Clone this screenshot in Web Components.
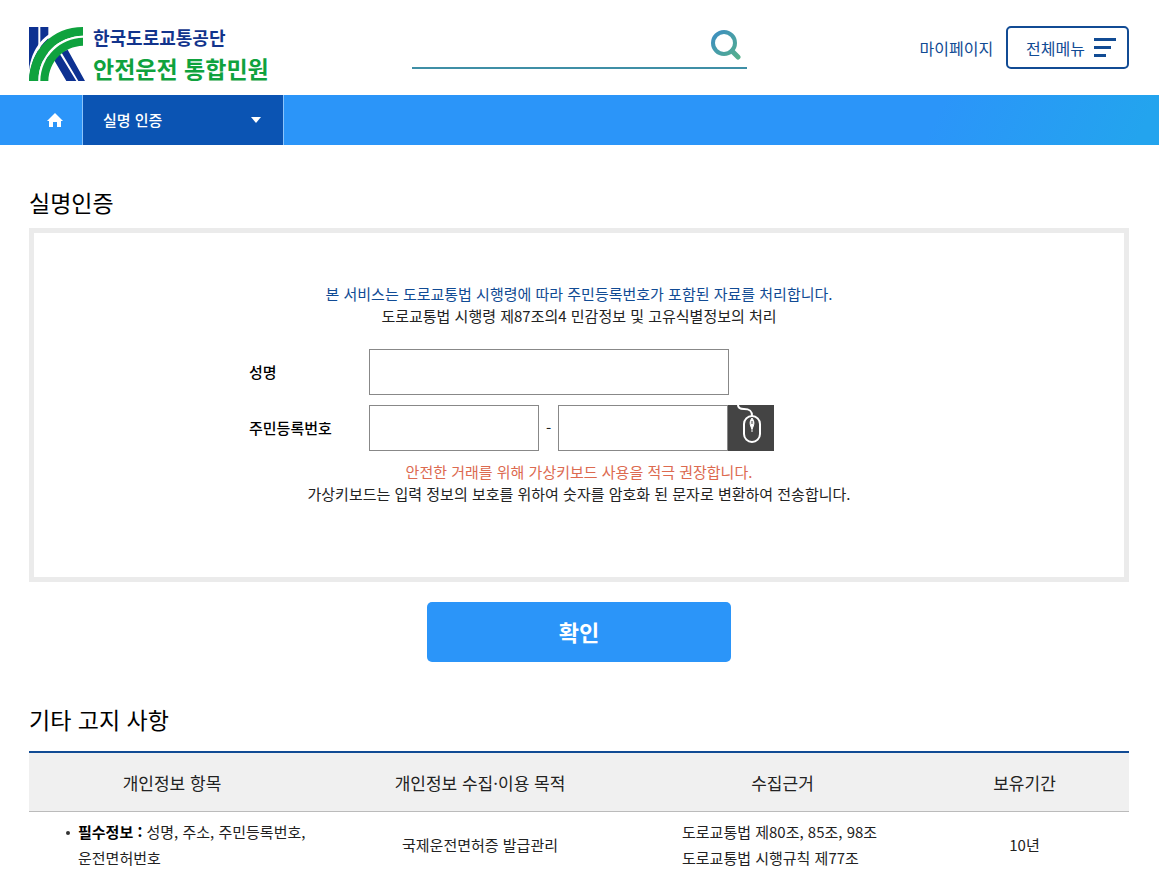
<!DOCTYPE html>
<html lang="ko">
<head>
<meta charset="UTF-8">
<meta name="viewport" content="width=device-width, initial-scale=1">
<title>실명인증 - 안전운전 통합민원</title>
<style>
    * { box-sizing: border-box; }
    body {
        margin: 0;
        background: #fff;
        color: #222;
        font-family: "Noto Sans CJK KR", "Noto Sans", sans-serif;
        font-size: 15px;
        line-height: 22px;
        --navy: #114b94;
        --blue: #2b95f9;
        --deep: #0b54b3;
        --gutter: 0 30px 0 29px;
    }
    main { display: block; padding: var(--gutter); }
</style>
</head>
<body>
<site-header></site-header>
<site-nav>실명 인증</site-nav>
<main>
    <page-section>
        <span slot="title">실명인증</span>
        <auth-form></auth-form>
    </page-section>
    <page-section>
        <span slot="title">기타 고지 사항</span>
        <notice-table></notice-table>
    </page-section>
</main>

<script>
// 로고
class SiteLogo extends HTMLElement {
    constructor() {
        super();
        this.attachShadow({ mode: 'open' });
        this.shadowRoot.innerHTML = `
            <style>
                :host { display: block; padding-top: 12px; }
                a {
                    display: flex;
                    align-items: center;
                    gap: 8px;
                    text-decoration: none;
                    font-weight: 700;
                }
                svg { width: 56px; height: 54px; flex: none; }
                .name { display: flex; flex-direction: column; }
                .org { font-size: 18px; line-height: 28px; color: #12348c; }
                .site { font-size: 23px; line-height: 34px; color: #0fa23e; }
            </style>
            <a href="#">
                <svg viewBox="0 0 168 162" aria-hidden="true">
                    <path fill="#0d3191" d="M0 0h28v162H0zM34 0h24v100H34z"/>
                    <path fill="#0d3191" d="M73 95L92 80L142 162H112zM97 76L116 68L168 162H148z"/>
                    <path fill="#fff" d="M0 162C6 70 60 0 162 0L162 -6C60 -4 10 50 0 130z"/>
                    <path fill="#0fa23e" d="M0 162C2 70 70 0 162 0V26C88 28 30 82 28 162z"/>
                    <path fill="#fff" d="M28 162C30 82 88 28 162 26V32C94 34 36 86 34 162z"/>
                    <path fill="#0fa23e" d="M34 162C36 86 94 34 162 32V56C104 58 60 102 58 162z"/>
                </svg>
                <span class="name">
                    <span class="org">한국도로교통공단</span>
                    <span class="site">안전운전 통합민원</span>
                </span>
            </a>
        `;
    }
}

// 상단 헤더
class SiteHeader extends HTMLElement {
    constructor() {
        super();
        this.attachShadow({ mode: 'open' });
        this.shadowRoot.innerHTML = `
            <style>
                * { box-sizing: border-box; }
                :host {
                    display: grid;
                    grid-template-columns: 1fr 335px 1fr;
                    align-items: center;
                    height: 95px;
                    padding: var(--gutter);
                }
                .search {
                    display: flex;
                    align-items: flex-start;
                    height: 42px;
                    border-bottom: 2px solid #3f8fa6;
                }
                .search input {
                    flex: 1;
                    min-width: 0;
                    height: 40px;
                    border: 0;
                    outline: 0;
                    background: none;
                    font: inherit;
                }
                .search button {
                    border: 0;
                    padding: 0 6px;
                    background: none;
                    cursor: pointer;
                }
                .search svg { display: block; width: 32px; height: 34px; }
                .util {
                    display: flex;
                    justify-content: flex-end;
                    align-items: center;
                    gap: 13px;
                    font-size: 16px;
                }
                .util a { color: var(--navy); text-decoration: none; }
                .menu {
                    display: flex;
                    align-items: center;
                    gap: 9px;
                    height: 43px;
                    padding: 0 10px 0 18px;
                    border: 2px solid var(--navy);
                    border-radius: 5px;
                    background: #fff;
                    color: var(--navy);
                    font: inherit;
                    cursor: pointer;
                }
                .menu svg { width: 23px; height: 20px; }
            </style>
            <site-logo></site-logo>
            <form class="search" role="search">
                <input type="text" aria-label="검색어">
                <button type="button" aria-label="검색">
                    <svg viewBox="0 0 32 34" fill="none" stroke="url(#g)">
                        <defs>
                            <linearGradient id="g" gradientUnits="userSpaceOnUse" x1="2" y1="4" x2="30" y2="32">
                                <stop offset="0" stop-color="#3b8cc4"/>
                                <stop offset="1" stop-color="#55b08a"/>
                            </linearGradient>
                        </defs>
                        <circle cx="15" cy="16" r="11" stroke-width="4"/>
                        <path d="M23 24L29 30" stroke-width="5" stroke-linecap="round"/>
                    </svg>
                </button>
            </form>
            <div class="util">
                <a href="#">마이페이지</a>
                <button class="menu" type="button">
                    전체메뉴
                    <svg viewBox="0 0 23 20" fill="currentColor" aria-hidden="true">
                        <path d="M0 0h22v3H0zM0 8h17v3H0zM0 16h12v3H0z"/>
                    </svg>
                </button>
            </div>
        `;
    }
}

// 현재 위치 바
class SiteNav extends HTMLElement {
    constructor() {
        super();
        this.attachShadow({ mode: 'open' });
        this.shadowRoot.innerHTML = `
            <style>
                * { box-sizing: border-box; }
                :host {
                    display: flex;
                    height: 50px;
                    background: linear-gradient(115deg, var(--blue) 80%, #23a4ee 98%);
                }
                .home {
                    display: flex;
                    align-items: center;
                    padding: 0 19px 0 47px;
                    border-right: 1px solid #8cc4fb;
                    color: #fff;
                }
                .home svg { width: 16px; height: 16px; }
                .current {
                    display: flex;
                    align-items: center;
                    justify-content: space-between;
                    width: 201px;
                    padding: 0 22px 0 20px;
                    border: 0;
                    border-right: 1px solid #8cc4fb;
                    background: var(--deep);
                    color: #fff;
                    font: inherit;
                    font-weight: 500;
                    cursor: pointer;
                }
                .current svg { width: 10px; height: 6px; }
            </style>
            <a class="home" href="#" aria-label="홈">
                <svg viewBox="0 0 16 16" fill="currentColor"><path d="M8 1L0 9h2v6h4v-5h4v5h4V9h2z"/></svg>
            </a>
            <button class="current" type="button">
                <slot></slot>
                <svg viewBox="0 0 10 6" fill="currentColor" aria-hidden="true"><path d="M0 0h10L5 6z"/></svg>
            </button>
        `;
    }
}

// 제목이 있는 영역
class PageSection extends HTMLElement {
    constructor() {
        super();
        this.attachShadow({ mode: 'open' });
        this.shadowRoot.innerHTML = `
            <style>
                :host { display: block; padding-top: 40px; }
                h2 {
                    margin: 0 0 8px;
                    font-size: 23px;
                    line-height: 35px;
                    font-weight: 400;
                    color: #000;
                }
            </style>
            <h2><slot name="title"></slot></h2>
            <slot></slot>
        `;
    }
}

// 실명인증 입력 폼
class AuthForm extends HTMLElement {
    constructor() {
        super();
        this.attachShadow({ mode: 'open' });
        this.shadowRoot.innerHTML = `
            <style>
                * { box-sizing: border-box; }
                :host { display: block; }
                .box {
                    padding: 50px 20px 72px;
                    border: 5px solid #ebebeb;
                }
                p { margin: 0; text-align: center; }
                .law { color: var(--navy); }
                .warn { color: #dc6a50; }
                .fields {
                    display: grid;
                    gap: 10px;
                    max-width: 660px;
                    margin: 22px auto 10px;
                }
                .row { display: flex; align-items: center; }
                label {
                    width: 120px;
                    font-size: 15px;
                    font-weight: 500;
                    color: #000;
                }
                input {
                    width: 170px;
                    height: 46px;
                    padding: 0 10px;
                    border: 1px solid #888;
                    border-radius: 0;
                    background: #fff;
                    font: inherit;
                }
                #name { width: 360px; }
                .dash { width: 19px; text-align: center; }
                .key {
                    width: 46px;
                    height: 46px;
                    padding: 0;
                    border: 0;
                    background: #444;
                    cursor: pointer;
                }
                .key svg { display: block; width: 46px; height: 46px; }
                .submit {
                    display: block;
                    width: 304px;
                    height: 60px;
                    margin: 20px auto 0;
                    padding: 0 0 3px;
                    border: 0;
                    border-radius: 5px;
                    background: var(--blue);
                    color: #fff;
                    font: inherit;
                    font-size: 22px;
                    font-weight: 700;
                    cursor: pointer;
                }
            </style>
            <form>
                <div class="box">
                    <p class="law">본 서비스는 도로교통법 시행령에 따라 주민등록번호가 포함된 자료를 처리합니다.</p>
                    <p>도로교통법 시행령 제87조의4 민감정보 및 고유식별정보의 처리</p>
                    <div class="fields">
                        <div class="row">
                            <label for="name">성명</label>
                            <input id="name" type="text">
                        </div>
                        <div class="row">
                            <label for="jumin1">주민등록번호</label>
                            <input id="jumin1" type="text" maxlength="6">
                            <span class="dash">-</span>
                            <input id="jumin2" type="password" maxlength="7" aria-label="주민등록번호 뒷자리">
                            <button class="key" type="button" aria-label="가상키보드">
                                <svg viewBox="0 0 46 46" fill="none" stroke="#fff" stroke-width="2" aria-hidden="true">
                                    <path d="M10 0C10 3 12 4 16 4C22 4 24 6 24 11"/>
                                    <rect x="16" y="11" width="16" height="26" rx="8"/>
                                    <path d="M24 13C21 17 22 20 24 24C26 20 27 17 24 13z" fill="#fff" stroke-width="1"/>
                                    <path d="M24 16v3" stroke="#444" stroke-width="1"/>
                                    <path d="M24 22v5" stroke-width="1"/>
                                </svg>
                            </button>
                        </div>
                    </div>
                    <p class="warn">안전한 거래를 위해 가상키보드 사용을 적극 권장합니다.</p>
                    <p>가상키보드는 입력 정보의 보호를 위하여 숫자를 암호화 된 문자로 변환하여 전송합니다.</p>
                </div>
                <button class="submit" type="button">확인</button>
            </form>
        `;
    }
}

// 개인정보 고지 표
class NoticeTable extends HTMLElement {
    constructor() {
        super();
        this.attachShadow({ mode: 'open' });
        this.shadowRoot.innerHTML = `
            <style>
                * { box-sizing: border-box; }
                :host { display: block; padding-top: 6px; }
                table {
                    width: 100%;
                    table-layout: fixed;
                    border-collapse: separate;
                    border-spacing: 0;
                    border-top: 2px solid var(--navy);
                }
                th {
                    height: 59px;
                    padding: 2px 0 0;
                    border-bottom: 1px solid #bbb;
                    background: #f0f0f0;
                    font-size: 17px;
                    font-weight: 400;
                }
                td {
                    padding: 7px 0;
                    border-bottom: 1px solid #ddd;
                    line-height: 26px;
                    text-align: center;
                }
                ul {
                    margin: 0;
                    padding: 0 0 0 37px;
                    list-style: none;
                    text-align: left;
                }
                .dot { display: flex; gap: 8px; }
                .dot::before {
                    content: "";
                    flex: none;
                    width: 4px;
                    height: 4px;
                    margin-top: 12px;
                    border-radius: 50%;
                    background: #333;
                }
                b { font-weight: 700; color: #000; }
            </style>
            <table>
                <colgroup>
                    <col style="width: 26%"><col style="width: 30%"><col style="width: 25%"><col style="width: 19%">
                </colgroup>
                <thead>
                    <tr>
                        <th scope="col">개인정보 항목</th>
                        <th scope="col">개인정보 수집·이용 목적</th>
                        <th scope="col">수집근거</th>
                        <th scope="col">보유기간</th>
                    </tr>
                </thead>
                <tbody>
                    <tr>
                        <td><ul><li class="dot"><span><b>필수정보 :</b> 성명, 주소, 주민등록번호,<br>운전면허번호</span></li></ul></td>
                        <td>국제운전면허증 발급관리</td>
                        <td><ul><li>도로교통법 제80조, 85조, 98조</li><li>도로교통법 시행규칙 제77조</li></ul></td>
                        <td>10년</td>
                    </tr>
                </tbody>
            </table>
        `;
    }
}

customElements.define('site-logo', SiteLogo);
customElements.define('site-header', SiteHeader);
customElements.define('site-nav', SiteNav);
customElements.define('page-section', PageSection);
customElements.define('auth-form', AuthForm);
customElements.define('notice-table', NoticeTable);
</script>
</body>
</html>
